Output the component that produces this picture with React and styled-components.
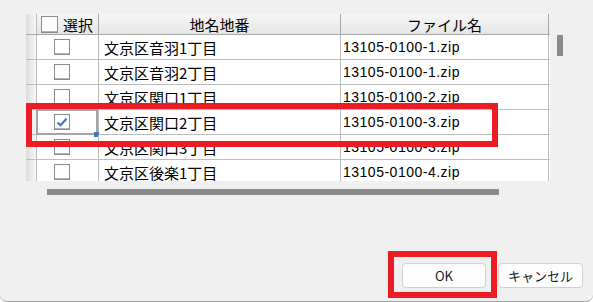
import React from "react";
import styled, { createGlobalStyle } from "styled-components";

const GlobalStyle = createGlobalStyle`
  html, body {
    margin: 0;
    padding: 0;
    background: #ffffff;
  }
  body {
    font-family: "Noto Sans CJK JP", "Noto Sans", sans-serif;
  }
`;

// Dialog window
const Window = styled.div`
  position: relative;
  box-sizing: border-box;
  width: 593px;
  height: 302px;
  background: #f0f0f0;
  border-bottom: 1px solid #a0a0a0;
  border-radius: 0 0 7px 7px;
  padding: 14px 0 0 26px;
  display: flex;
  flex-direction: column;
`;

const GridControl = styled.div`
  display: grid;
  grid-template-columns: 524px 20px;
  grid-template-rows: 167px 18px;
`;

const DataArea = styled.div`
  background: #ffffff;
  overflow: hidden;
  font-size: 15px;
  color: #000;
`;

const Row = styled.div`
  display: grid;
  grid-template-columns: 11px 62px 242px 208px;
  height: ${p => (p.$head ? "21px" : "25px")};
  box-sizing: border-box;
  border-bottom: 1px solid ${p => (p.$head ? "#a8a8a8" : "#bcbcbc")};
  background: ${p => (p.$head ? "linear-gradient(#f6f6f6, #e6e6e6)" : "#fff")};
`;

const RowHeader = styled.div`
  background: linear-gradient(to right, #dcdcdc, #f6f6f6);
  border-right: 1px solid #bcbcbc;
`;

const Cell = styled.div`
  position: relative;
  display: flex;
  align-items: center;
  justify-content: ${p => (p.$center ? "center" : "flex-start")};
  padding-left: ${p => p.$pad || 0}px;
  border-right: 1px solid ${p => (p.$head ? "#a8a8a8" : "#bcbcbc")};
  line-height: 1;
  white-space: nowrap;
  overflow: visible;
`;

const Focus = styled.div`
  position: absolute;
  left: -1px;
  top: -1px;
  right: 0;
  bottom: -1px;
  border: 2px solid #a4a4a4;
  pointer-events: none;
`;

const Handle = styled.div`
  position: absolute;
  right: -3px;
  bottom: -4px;
  width: 5px;
  height: 5px;
  background: #3f7bbd;
`;

const Box = styled.div`
  box-sizing: border-box;
  width: ${p => (p.$big ? 17 : 16)}px;
  height: ${p => (p.$big ? 17 : 16)}px;
  background: #fff;
  border: 1px solid #8c8c8c;
  box-shadow: inset 0 -1px 0 #b4b4b4;
  display: flex;
  align-items: center;
  justify-content: center;
  margin-right: ${p => (p.$big ? 5 : 0)}px;
`;

const Mono = styled.span`
  font-family: "Liberation Sans", "Noto Sans", sans-serif;
  font-size: 14px;
  letter-spacing: 0.5px;
`;

const VScroll = styled.div`
  padding: 21px 0 0 7px;
`;

const HScroll = styled.div`
  padding: 8px 0 0 21px;
`;

const Thumb = styled.div`
  background: #8a8a8a;
  width: ${p => p.$w}px;
  height: ${p => p.$h}px;
`;

const Footer = styled.div`
  margin-top: auto;
  display: flex;
  justify-content: flex-end;
  gap: 12px;
  padding: 0 10px 13px 0;
`;

const Button = styled.button`
  box-sizing: border-box;
  width: ${p => p.$w}px;
  height: 25px;
  background: #fdfdfd;
  border: 1px solid #d0d0d0;
  border-radius: 4px;
  font-family: "Noto Sans CJK JP", "Noto Sans", sans-serif;
  font-size: 13px;
  color: #1a1a1a;
  padding: 0;
`;

const Mark = styled.div`
  position: absolute;
  left: ${p => p.$x}px;
  top: ${p => p.$y}px;
  width: ${p => p.$w}px;
  height: ${p => p.$h}px;
  box-sizing: border-box;
  border: 6px solid #ec1c24;
  pointer-events: none;
`;

const Check = () => (
  <svg width="12" height="10" viewBox="0 0 12 10">
    <path d="M1.5 5.5 L4.5 8.2 L10.5 1.8" fill="none" stroke="#3a78ba" strokeWidth="2.2" />
  </svg>
);

const rows = [
  { name: "文京区音羽1丁目", file: "13105-0100-1.zip" },
  { name: "文京区音羽2丁目", file: "13105-0100-1.zip" },
  { name: "文京区関口1丁目", file: "13105-0100-2.zip" },
  { name: "文京区関口2丁目", file: "13105-0100-3.zip", checked: true },
  { name: "文京区関口3丁目", file: "13105-0100-3.zip" },
  { name: "文京区後楽1丁目", file: "13105-0100-4.zip" },
];

export default function App() {
  return (
    <>
      <GlobalStyle />
      <Window>
        <GridControl>
          <DataArea>
            <Row $head>
              <RowHeader />
              <Cell $head $pad={4}>
                <Box $big />
                選択
              </Cell>
              <Cell $head $center>地名地番</Cell>
              <Cell $head $center>ファイル名</Cell>
            </Row>
            {rows.map((r, i) => (
              <Row key={i}>
                <RowHeader />
                <Cell $pad={17}>
                  <Box>{r.checked && <Check />}</Box>
                  {r.checked && (
                    <Focus>
                      <Handle />
                    </Focus>
                  )}
                </Cell>
                <Cell $pad={5}>{r.name}</Cell>
                <Cell $pad={2}>
                  <Mono>{r.file}</Mono>
                </Cell>
              </Row>
            ))}
          </DataArea>
          <VScroll>
            <Thumb $w={6} $h={21} />
          </VScroll>
          <HScroll>
            <Thumb $w={452} $h={6} />
          </HScroll>
        </GridControl>
        <Footer>
          <Button $w={84}>OK</Button>
          <Button $w={85}>キャンセル</Button>
        </Footer>
        <Mark $x={26} $y={103} $w={472} $h={44} />
        <Mark $x={388} $y={251} $w={109} $h={47} />
      </Window>
    </>
  );
}
